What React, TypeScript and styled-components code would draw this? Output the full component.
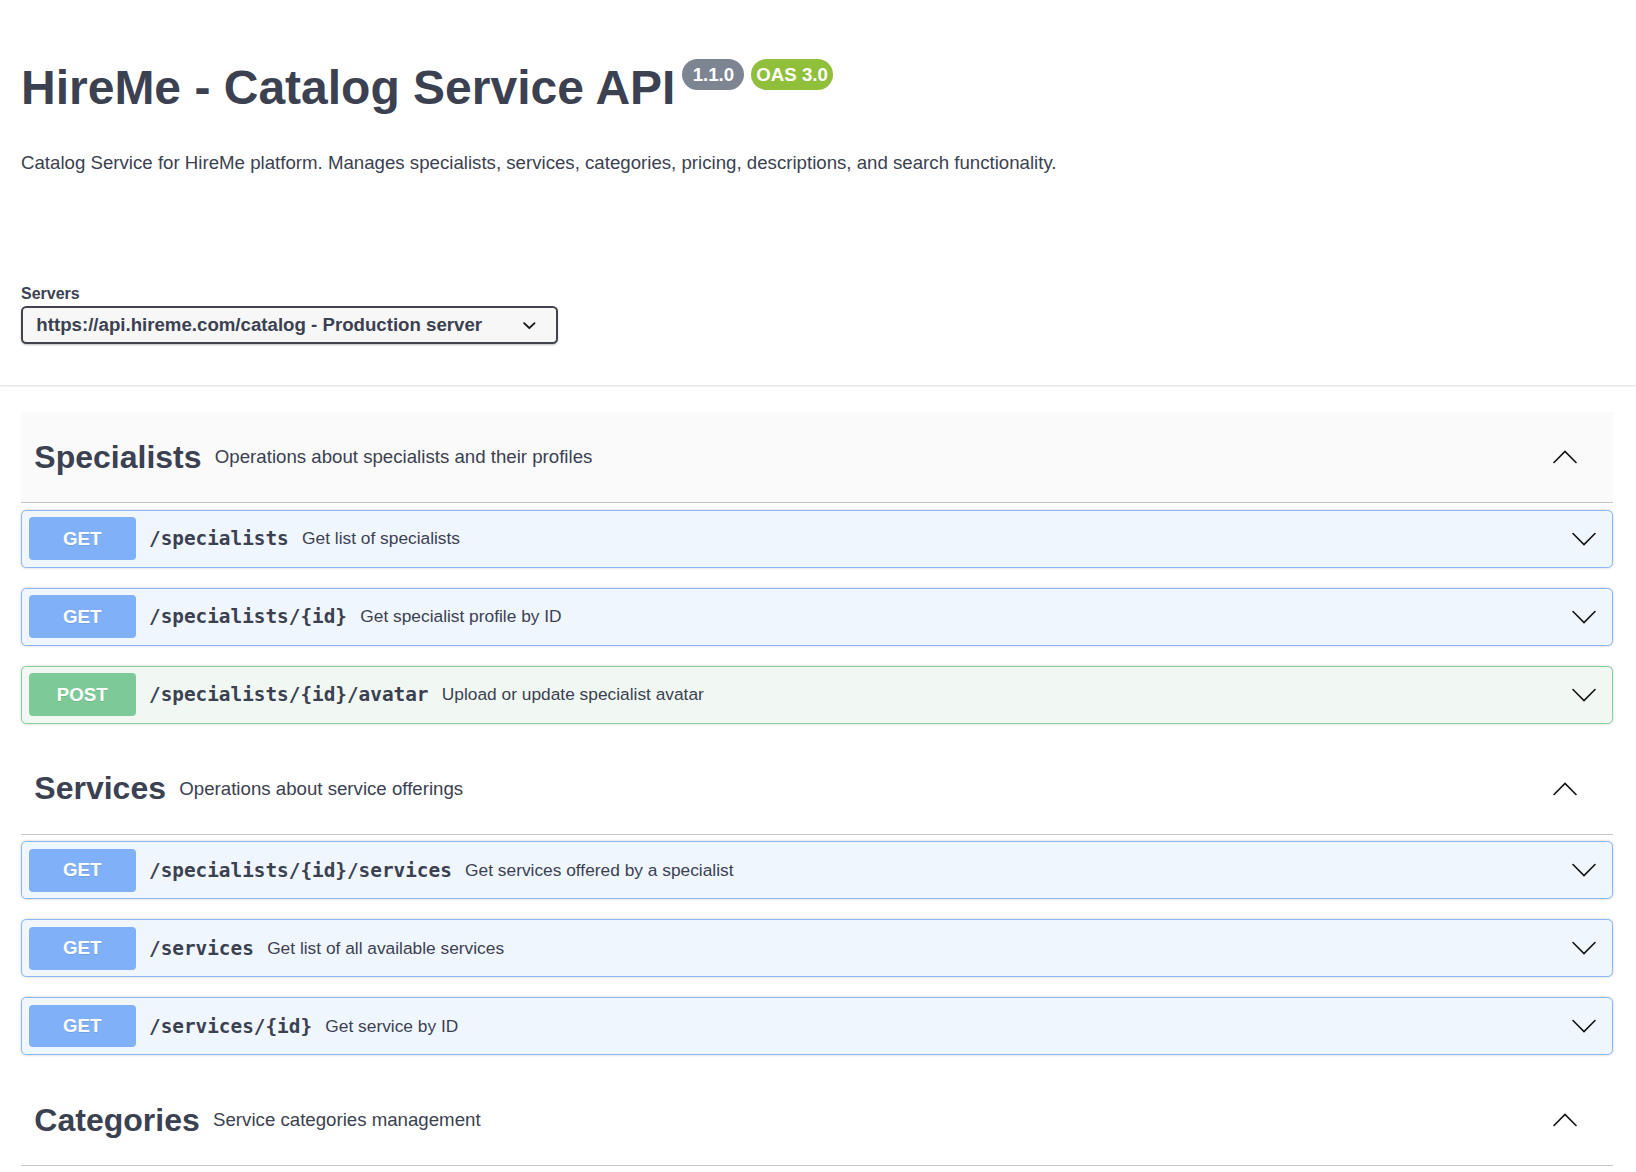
import React from "react";
import styled, { createGlobalStyle } from "styled-components";

const Global = createGlobalStyle`
  html, body { margin: 0; padding: 0; background: #fff; }
  body { font-family: "Liberation Sans", Arial, sans-serif; color: #3b4151; }
  * { box-sizing: border-box; }
`;

const Wrapper = styled.div`
  padding: 0 23px 0 21px;
`;

const Info = styled.div`
  padding-top: 60px;
  padding-bottom: 68.5px;
`;

const TitleRow = styled.div`
  display: flex;
  align-items: flex-start;
`;

const Title = styled.h2`
  margin: 0;
  font-size: 48px;
  line-height: 55px;
  font-weight: 700;
  color: #3b4151;
`;

const Badge = styled.small<{ $bg: string; $first?: boolean }>`
  display: inline-block;
  margin: -1px 0 0 ${(p) => (p.$first ? "7px" : "7px")};
  padding: 2.67px 5px;
  border-radius: 57px;
  background: ${(p) => p.$bg};
  color: #fff;
  font-size: 18.67px;
  line-height: 26px;
  font-weight: 700;
  white-space: pre;
`;

const Description = styled.p`
  margin: 37px 0 0;
  font-size: 18.67px;
  line-height: 21.5px;
  color: #3b4151;
`;

const SchemeContainer = styled.div`
  background: #fff;
  box-shadow: 0 1px 2px 0 rgba(0, 0, 0, 0.15);
  padding: 43px 21px 41px;
  margin-bottom: 27px;
`;

const ServersLabel = styled.div`
  font-size: 16px;
  line-height: 18px;
  font-weight: 700;
  color: #3b4151;
  margin-bottom: 3px;
`;

const Select = styled.div`
  width: 537px;
  height: 38px;
  display: flex;
  align-items: center;
  justify-content: space-between;
  padding: 0 13.33px;
  border: 2px solid #41444e;
  border-radius: 5.33px;
  background: #f7f7f7;
  box-shadow: 0 1px 2px 0 rgba(0, 0, 0, 0.25);
  font-size: 18.67px;
  font-weight: 700;
  color: #3b4151;
`;

const TagSection = styled.section`
  display: flex;
  flex-direction: column;
`;

const TagHeader = styled.div<{ $hover?: boolean }>`
  display: flex;
  align-items: center;
  min-height: 91px;
  padding: 0 36px 0 13.33px;
  border-bottom: 1px solid rgba(59, 65, 81, 0.3);
  margin-bottom: 6.67px;
  background: ${(p) => (p.$hover ? "rgba(0,0,0,0.02)" : "transparent")};
`;

const TagName = styled.span`
  font-size: 32px;
  font-weight: 700;
  color: #3b4151;
`;

const TagDesc = styled.small`
  flex: 1;
  padding: 0 13.33px;
  font-size: 18.67px;
  color: #3b4151;
`;

const methodColors: Record<string, { badge: string; border: string; bg: string }> = {
  GET: { badge: "#80b0f8", border: "#8ab6f6", bg: "#f0f6fe" },
  POST: { badge: "#7dca98", border: "#84cf9d", bg: "#f1f8f3" },
};

const OpBlock = styled.div<{ $m: string }>`
  border: 1px solid ${(p) => methodColors[p.$m].border};
  background: ${(p) => methodColors[p.$m].bg};
  border-radius: 5.33px;
  box-shadow: 0 0 3px rgba(0, 0, 0, 0.19);
  margin-bottom: 20px;
`;

const Summary = styled.div`
  display: flex;
  align-items: center;
  padding: 6.67px;
`;

const Method = styled.span<{ $m: string }>`
  min-width: 107px;
  height: 42.67px;
  display: flex;
  align-items: center;
  justify-content: center;
  border-radius: 4px;
  background: ${(p) => methodColors[p.$m].badge};
  color: #fff;
  font-size: 18.67px;
  font-weight: 700;
  text-shadow: 0 1px 0 rgba(0, 0, 0, 0.1);
`;

const Path = styled.span`
  padding: 0 13.33px;
  font-family: "DejaVu Sans Mono", "Liberation Mono", monospace;
  font-size: 19.35px;
  font-weight: 700;
  color: #3b4151;
`;

const OpDesc = styled.span`
  flex: 1;
  font-size: 17.33px;
  color: #3b4151;
`;

const ChevronSvg = styled.svg<{ $mr?: number }>`
  width: 24px;
  height: 24px;
  flex: none;
  margin-right: ${(p) => p.$mr ?? 0}px;
`;

const Chevron = ({ up, mr }: { up?: boolean; mr?: number }) => (
  <ChevronSvg viewBox="0 0 24 24" $mr={mr}>
    <polyline
      points={up ? "1,17.5 12,6.5 23,17.5" : "1,6.5 12,17.5 23,6.5"}
      fill="none"
      stroke="#111"
      strokeWidth={1.6}
      strokeLinecap="round"
      strokeLinejoin="miter"
    />
  </ChevronSvg>
);

const SelectArrow = styled.svg`
  width: 26.67px;
  height: 26.67px;
  flex: none;
`;

type Op = { m: string; path: string; desc: string };

const tags: { name: string; desc: string; hover?: boolean; ops: Op[] }[] = [
  {
    name: "Specialists",
    desc: "Operations about specialists and their profiles",
    hover: true,
    ops: [
      { m: "GET", path: "/specialists", desc: "Get list of specialists" },
      { m: "GET", path: "/specialists/{id}", desc: "Get specialist profile by ID" },
      { m: "POST", path: "/specialists/{id}/avatar", desc: "Upload or update specialist avatar" },
    ],
  },
  {
    name: "Services",
    desc: "Operations about service offerings",
    ops: [
      { m: "GET", path: "/specialists/{id}/services", desc: "Get services offered by a specialist" },
      { m: "GET", path: "/services", desc: "Get list of all available services" },
      { m: "GET", path: "/services/{id}", desc: "Get service by ID" },
    ],
  },
  {
    name: "Categories",
    desc: "Service categories management",
    ops: [],
  },
];

export default function App() {
  return (
    <>
      <Global />
      <Wrapper>
        <Info>
          <TitleRow>
            <Title>HireMe - Catalog Service API</Title>
            <Badge $bg="#7d8492" $first>{" 1.1.0 "}</Badge>
            <Badge $bg="#90bf3b">OAS 3.0</Badge>
          </TitleRow>
          <Description>
            Catalog Service for HireMe platform. Manages specialists, services, categories, pricing, descriptions, and search functionality.
          </Description>
        </Info>
      </Wrapper>
      <SchemeContainer>
        <ServersLabel>Servers</ServersLabel>
        <Select>
          <span>https://api.hireme.com/catalog - Production server</span>
          <SelectArrow viewBox="0 0 20 20">
            <path
              fill="#1a1a1a"
              d="M13.418 7.859a.695.695 0 01.978 0 .68.68 0 010 .969l-3.908 3.83a.697.697 0 01-.979 0l-3.908-3.83a.68.68 0 010-.969.695.695 0 01.978 0L10 11l3.418-3.141z"
            />
          </SelectArrow>
        </Select>
      </SchemeContainer>
      <Wrapper>
        {tags.map((t) => (
          <TagSection key={t.name}>
            <TagHeader $hover={t.hover}>
              <TagName>{t.name}</TagName>
              <TagDesc>{t.desc}</TagDesc>
              <Chevron up />
            </TagHeader>
            {t.ops.map((o) => (
              <OpBlock key={o.path + o.m} $m={o.m}>
                <Summary>
                  <Method $m={o.m}>{o.m}</Method>
                  <Path>{o.path}</Path>
                  <OpDesc>{o.desc}</OpDesc>
                  <Chevron mr={9} />
                </Summary>
              </OpBlock>
            ))}
          </TagSection>
        ))}
      </Wrapper>
    </>
  );
}
